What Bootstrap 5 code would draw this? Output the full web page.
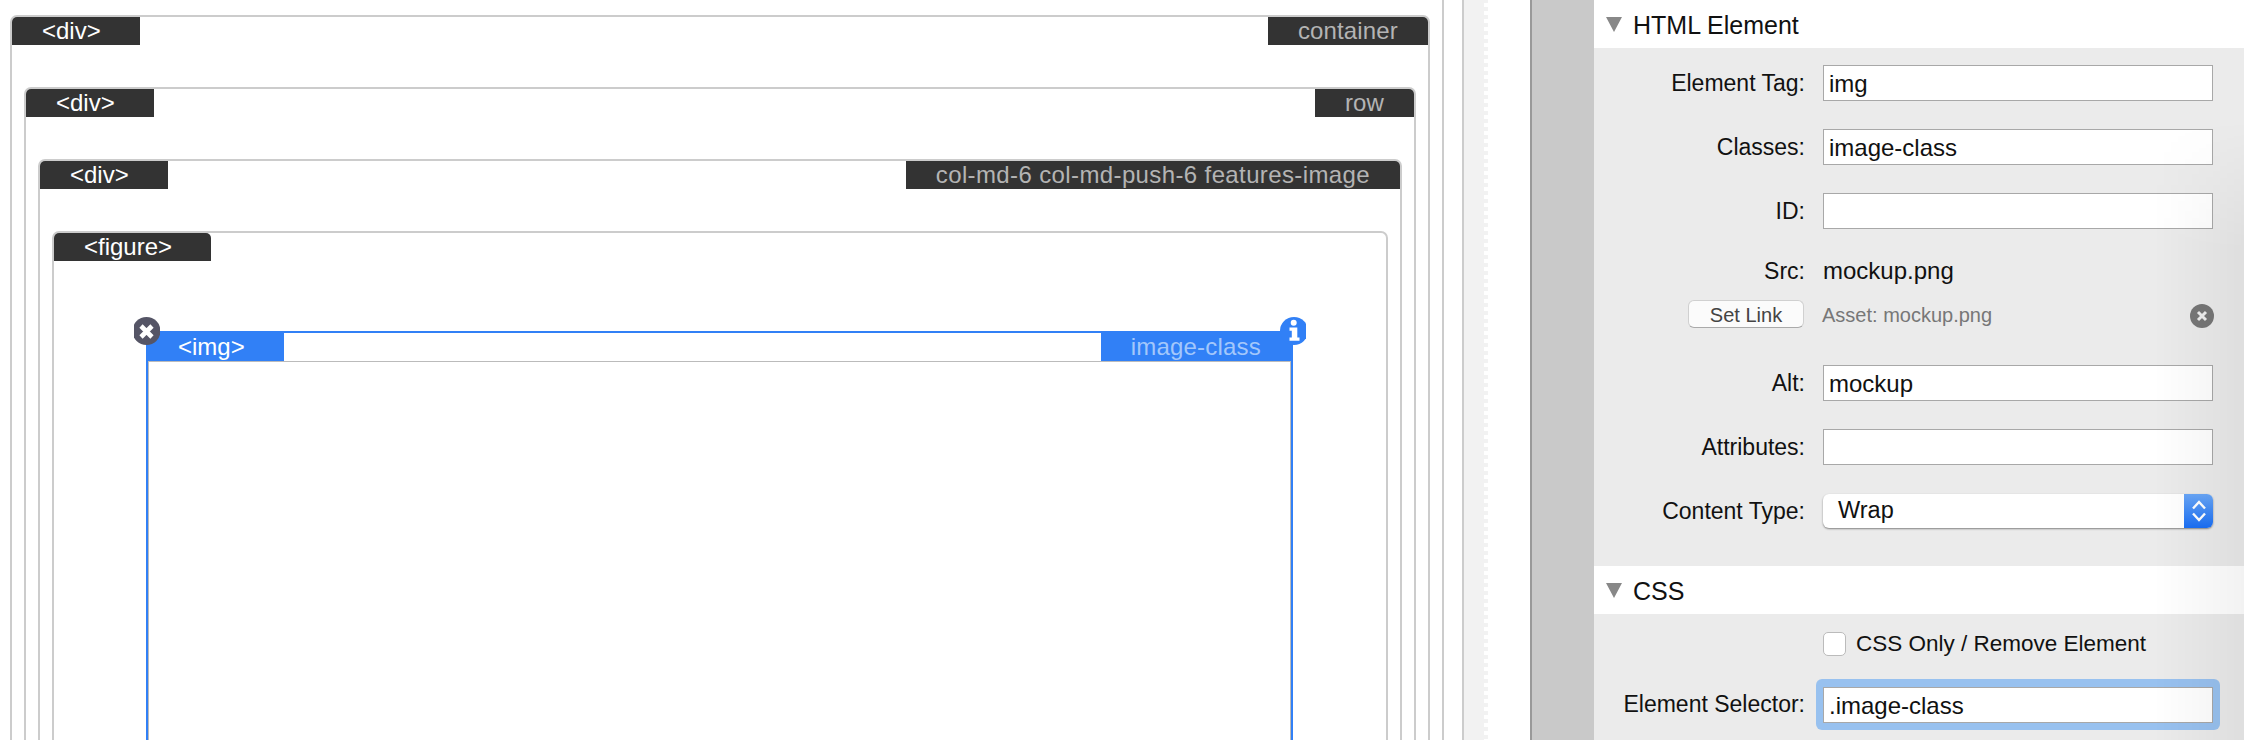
<!DOCTYPE html>
<html lang="en">
<head>
<meta charset="utf-8">
<title>Element inspector</title>
<link href="https://cdn.jsdelivr.net/npm/bootstrap@5.3.0/dist/css/bootstrap.min.css" rel="stylesheet">
<style>
html,body{height:740px;overflow:hidden;background:#fff;}
body{font-family:"Liberation Sans",Arial,sans-serif;color:#111;}
.stage{width:2244px;height:740px;overflow:hidden;}
.canvas-pane{width:1444px;flex:none;height:740px;overflow:hidden;border-right:2px solid #ccc;padding:15px 12px 0 10px;}
.gutter-a{width:18px;flex:none;}
.gutter-b{width:26px;flex:none;border-left:2px solid #ccc;background:#f2f2f2;position:relative;}
.gutter-b::after{content:"";position:absolute;top:3px;bottom:0;right:0;width:4px;background:repeating-linear-gradient(180deg,#fff 0 4px,#f2f2f2 4px 8px);}
.gutter-c{width:42px;flex:none;}
.split-gray{width:64px;flex:none;background:#c9c9c9;border-left:2px solid #999;}
.tag-box{border:2px solid #ccc;border-radius:7px 7px 0 0;height:1200px;}
.tag-box .tag-box{margin:42px 12px 0 12px;}
.tag-head{height:28px;font-size:24px;line-height:27px;}
.tag-name{background:#333;color:#fff;padding:0 39px 0 30px;}
.tag-class{background:#333;color:#b4b4b4;padding:0 30px;letter-spacing:.15px;}
.tag-long{letter-spacing:.38px;}
.tag-box>.tag-head>:first-child{border-top-left-radius:5px;}
.tag-box>.tag-head>:last-child{border-top-right-radius:5px;}
.selected-box{position:relative;margin:70px 93px 0 92px;border:2px solid #3180f6;height:1000px;}
.selected-head{height:28px;font-size:24px;line-height:27px;border-bottom:1px solid #bbb;box-sizing:content-box;}
.sel-name{background:#3180f6;color:#fff;padding:0 39px 0 30px;}
.sel-class{background:#3180f6;color:#a3c7fb;padding:0 30px;letter-spacing:.2px;}
.sel-inner{border-left:1px solid #bbb;border-right:1px solid #bbb;height:900px;}
.badge-x{position:absolute;left:-14px;top:-16px;}
.badge-i{position:absolute;right:-15px;top:-16px;}
.panel{width:650px;flex:none;background:#ebebeb;height:740px;overflow:hidden;position:relative;}
.panel::after{content:"";position:absolute;inset:120px 0 0 0;pointer-events:none;background:linear-gradient(90deg,rgba(0,0,0,0) 560px,rgba(0,0,0,.05) 650px);-webkit-mask-image:linear-gradient(180deg,transparent,#000 130px);mask-image:linear-gradient(180deg,transparent,#000 130px);}
.sec-head{height:48px;background:#fff;padding:4px 0 0 12px;font-size:25px;gap:11px;}
.tri{width:0;height:0;border-left:8.5px solid transparent;border-right:8.5px solid transparent;border-top:15px solid #888;margin-top:-3px;}
.fields{padding-top:17px;height:518px;}
.field{height:36px;margin-bottom:28px;}
.field-src{height:28px;margin-bottom:15px;}
.lbl{width:211px;flex:none;text-align:right;font-size:23px;margin-right:18px;color:#111;}
.tf{width:390px;height:36px;background:#fff;border:1px solid #a8a8a8;border-radius:0;font-size:24px;padding:0 0 0 5px;color:#111;line-height:36px;}
.src-val{font-size:24px;}
.link-row{height:28px;margin:0 0 37px;position:relative;}
.btn-set{width:116px;height:28px;margin-left:94px;margin-right:18px;background:#fbfbfb;border:1px solid #d0d0d0;border-bottom-color:#aaa;border-radius:6px;font-size:20px;line-height:24px;color:#444;padding:1px 0 0;}
.asset{font-size:20px;color:#777;flex:1;padding-top:2px;}
.clear-x{position:absolute;left:596px;top:4px;}
.sel-ctl{width:390px;height:34px;background:#fff;border-radius:6px;box-shadow:0 1px 2px rgba(0,0,0,.45);font-size:23.5px;padding-left:15px;overflow:hidden;}
.sel-arrows{width:29px;height:100%;background:linear-gradient(180deg,#6aa7f7,#1a6ff5);}
.fields-css{padding-top:18px;}
.chk{width:23px;height:24px;background:#fff;border:1px solid #bbb;border-radius:5px;margin:0 10px 0 229px;flex:none;}
.chk-row{height:24px;font-size:22.5px;margin-bottom:23px;}
.ring{width:404px;height:51px;margin-left:-7px;background:#98c1ef;border-radius:6px;padding:8px 7px 7px;}
</style>
</head>
<body>
<div class="stage d-flex">
  <div class="canvas-pane">
    <div class="tag-box">
      <div class="tag-head d-flex justify-content-between"><span class="tag-name">&lt;div&gt;</span><span class="tag-class">container</span></div>
      <div class="tag-box">
        <div class="tag-head d-flex justify-content-between"><span class="tag-name">&lt;div&gt;</span><span class="tag-class">row</span></div>
        <div class="tag-box">
          <div class="tag-head d-flex justify-content-between"><span class="tag-name">&lt;div&gt;</span><span class="tag-class tag-long">col-md-6 col-md-push-6 features-image</span></div>
          <div class="tag-box">
            <div class="tag-head d-flex justify-content-between"><span class="tag-name">&lt;figure&gt;</span></div>
            <div class="selected-box">
              <div class="selected-head d-flex justify-content-between"><span class="sel-name">&lt;img&gt;</span><span class="sel-class">image-class</span></div>
              <div class="sel-inner"></div>
              <svg class="badge-x" width="26" height="28" viewBox="0 0 26 28"><circle cx="12.5" cy="14" r="14" fill="#555566"/><path d="M7 9 L18 20 M18 9 L7 20" stroke="#fff" stroke-width="4.6"/></svg>
              <svg class="badge-i" width="26" height="28" viewBox="0 0 26 28"><circle cx="14" cy="14" r="14" fill="#3180f6"/><circle cx="13.7" cy="5.8" r="3" fill="#fff"/><path d="M9.5 10.5h7.8v10h2.2v3.2H9.5v-3.2h2.3v-6.8H9.5z" fill="#fff"/></svg>
            </div>
          </div>
        </div>
      </div>
    </div>
  </div>
  <div class="gutter-a"></div>
  <div class="gutter-b"></div>
  <div class="gutter-c"></div>
  <div class="split-gray"></div>
  <div class="panel">
    <div class="sec-head d-flex align-items-center"><span class="tri"></span><span>HTML Element</span></div>
    <div class="fields">
      <div class="field d-flex align-items-center"><span class="lbl">Element Tag:</span><div class="tf">img</div></div>
      <div class="field d-flex align-items-center"><span class="lbl">Classes:</span><div class="tf">image-class</div></div>
      <div class="field d-flex align-items-center"><span class="lbl">ID:</span><div class="tf"></div></div>
      <div class="field field-src d-flex align-items-center"><span class="lbl">Src:</span><span class="src-val">mockup.png</span></div>
      <div class="link-row d-flex align-items-center"><button class="btn-set" type="button">Set Link</button><span class="asset">Asset: mockup.png</span>
        <svg class="clear-x" width="24" height="24" viewBox="0 0 24 24"><circle cx="12" cy="12" r="12" fill="#777"/><path d="M8 8 L16 16 M16 8 L8 16" stroke="#eee" stroke-width="3"/></svg>
      </div>
      <div class="field d-flex align-items-center"><span class="lbl">Alt:</span><div class="tf">mockup</div></div>
      <div class="field d-flex align-items-center"><span class="lbl">Attributes:</span><div class="tf"></div></div>
      <div class="field d-flex align-items-center"><span class="lbl">Content Type:</span>
        <div class="sel-ctl d-flex align-items-center justify-content-between"><span>Wrap</span>
          <span class="sel-arrows d-flex align-items-center justify-content-center"><svg width="14" height="26" viewBox="0 0 14 26" fill="none" stroke="#fff" stroke-width="2.4"><path d="M1 10.5 L7 4 L13 10.5 M1 15.5 L7 22 L13 15.5"/></svg></span>
        </div>
      </div>
    </div>
    <div class="sec-head d-flex align-items-center"><span class="tri"></span><span>CSS</span></div>
    <div class="fields-css">
      <div class="chk-row d-flex align-items-center"><span class="chk"></span><span>CSS Only / Remove Element</span></div>
      <div class="d-flex align-items-center"><span class="lbl">Element Selector:</span><div class="ring"><div class="tf">.image-class</div></div></div>
    </div>
  </div>
</div>
<script src="https://cdn.jsdelivr.net/npm/bootstrap@5.3.0/dist/js/bootstrap.bundle.min.js"></script>
</body>
</html>
